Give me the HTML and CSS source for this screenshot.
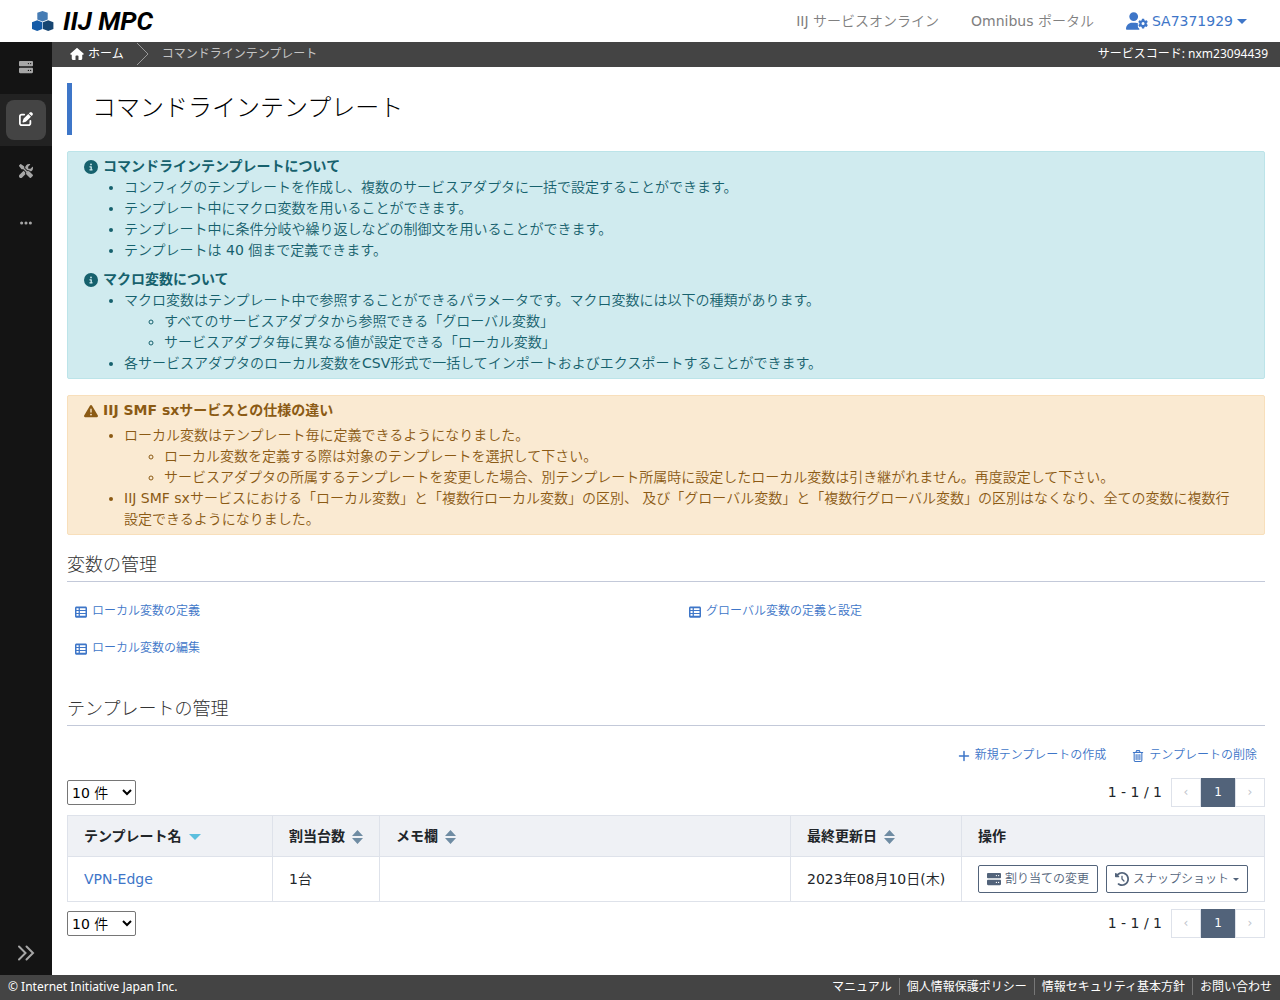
FILE: index.html
```html
<!DOCTYPE html>
<html lang="ja">
<head>
<meta charset="utf-8">
<meta name="viewport" content="width=device-width, initial-scale=1">
<title>コマンドラインテンプレート | IIJ MPC</title>
<link rel="stylesheet" href="styles.css">
</head>
<body>
<svg class="defs" aria-hidden="true">
  <symbol id="i-server" viewBox="0 0 512 512"><path d="M40 32C18 32 0 50 0 72v120c0 22 18 40 40 40h432c22 0 40-18 40-40V72c0-22-18-40-40-40H40zm304 76a24 24 0 1 1 0 48 24 24 0 1 1 0-48zm56 24a24 24 0 1 1 48 0 24 24 0 1 1-48 0zM40 280c-22 0-40 18-40 40v120c0 22 18 40 40 40h432c22 0 40-18 40-40V320c0-22-18-40-40-40H40zm304 76a24 24 0 1 1 0 48 24 24 0 1 1 0-48zm56 24a24 24 0 1 1 48 0 24 24 0 1 1-48 0z"/></symbol>
  <symbol id="i-edit" viewBox="0 0 512 512"><path d="M471.600 21.700c-21.900-21.900-57.300-21.900-79.200 0L362.300 51.700l97.900 97.900 30.100-30.100c21.900-21.900 21.900-57.300 0-79.200L471.600 21.700zm-299.200 220c-6.100 6.100-10.800 13.600-13.500 21.900l-29.600 88.800c-2.900 8.600-.6 18.100 5.800 24.600s15.900 8.700 24.600 5.800l88.800-29.600c8.200-2.700 15.700-7.400 21.900-13.500L437.700 172.300 339.700 74.300 172.400 241.700zM96 64c-53 0-96 43-96 96v256c0 53 43 96 96 96h256c53 0 96-43 96-96v-96c0-17.700-14.300-32-32-32s-32 14.300-32 32v96c0 17.700-14.300 32-32 32H96c-17.700 0-32-14.300-32-32V160c0-17.700 14.300-32 32-32h96c17.700 0 32-14.300 32-32s-14.300-32-32-32H96z"/></symbol>
  <symbol id="i-tools" viewBox="0 0 512 512"><path d="M78.600 5C69.100-2.400 55.600-1.500 47 7L7 47c-8.500 8.500-9.400 22-2.100 31.600l80 104c4.500 5.900 11.600 9.400 19 9.400h54.100l109 109c-14.700 29-10 65.400 14.300 89.600l112 112c12.500 12.500 32.800 12.500 45.300 0l64-64c12.500-12.500 12.500-32.800 0-45.300l-112-112c-24.200-24.200-60.600-29-89.600-14.300l-109-109V104c0-7.500-3.500-14.500-9.400-19L78.600 5zM19.900 396.100C7.200 408.800 0 426.100 0 444.100C0 481.600 30.400 512 67.900 512c18 0 35.300-7.200 48-19.900L233.700 374.300c-7.800-20.900-9-43.600-3.600-65.100l-61.700-61.700L19.900 396.100zM512 144c0-10.500-1.100-20.700-3.200-30.500c-2.400-11.200-16.100-14.100-24.200-6l-63.900 63.900c-3 3-7.100 4.700-11.300 4.700H352c-8.800 0-16-7.200-16-16V102.600c0-4.200 1.700-8.300 4.700-11.300l63.900-63.900c8.100-8.100 5.200-21.800-6-24.200C388.700 1.100 378.500 0 368 0C288.500 0 224 64.500 224 144l0 .8 85.300 85.300c36-9.100 75.800 .5 104 28.700L429 274.500c49-23 83-72.800 83-130.500z"/></symbol>
  <symbol id="i-dots" viewBox="0 0 448 512"><path d="M8 256a56 56 0 1 1 112 0 56 56 0 1 1-112 0zm160 0a56 56 0 1 1 112 0 56 56 0 1 1-112 0zm216-56a56 56 0 1 1 0 112 56 56 0 1 1 0-112z"/></symbol>
  <symbol id="i-home" viewBox="0 0 576 512"><path d="M575.800 255.500c0 18-15 32.100-32 32.100h-32l.7 160.200c0 35.300-28.700 64.200-64 64.200H352V352c0-17.700-14.300-32-32-32h-64c-17.700 0-32 14.300-32 32v160h-96c-35.300 0-64-28.700-64-64V287.600H32c-18 0-32-14-32-32.100 0-9 3-17 10-24L266.400 8c7-7 15-8 22-8s15 2 21 7l255.400 224.500c8 7 12 15 11 24z"/></symbol>
  <symbol id="i-info" viewBox="0 0 512 512"><path d="M256 512A256 256 0 1 0 256 0a256 256 0 1 0 0 512zM216 336h24v-64h-24c-13.300 0-24-10.700-24-24s10.700-24 24-24h48c13.300 0 24 10.700 24 24v88h8c13.300 0 24 10.700 24 24s-10.700 24-24 24h-80c-13.300 0-24-10.700-24-24s10.700-24 24-24zm40-208a32 32 0 1 1 0 64 32 32 0 1 1 0-64z"/></symbol>
  <symbol id="i-warn" viewBox="0 0 512 512"><path d="M256 32c14.200 0 27.300 7.500 34.500 19.800l216 368c7.300 12.400 7.300 27.700 .2 40.100S486.300 480 472 480H40c-14.300 0-27.600-7.700-34.700-20.100s-7-27.800 .2-40.100l216-368C228.700 39.500 241.800 32 256 32zm0 128c-13.300 0-24 10.700-24 24v112c0 13.300 10.700 24 24 24s24-10.700 24-24V184c0-13.300-10.700-24-24-24zm32 224a32 32 0 1 0-64 0 32 32 0 1 0 64 0z"/></symbol>
  <symbol id="i-table" viewBox="0 0 512 512"><path fill-rule="evenodd" d="M64 16h384c35 0 64 29 64 64v352c0 35-29 64-64 64H64c-35 0-64-29-64-64V80c0-35 29-64 64-64zM64 92h90v80H64zM208 92h240v80H208zM64 216h90v80H64zM208 216h240v80H208zM64 340h90v80H64zM208 340h240v80H208z"/></symbol>
  <symbol id="i-user" viewBox="0 0 640 512"><path d="M224 256A128 128 0 1 0 224 0a128 128 0 1 0 0 256zm-45.700 48C79.800 304 0 383.800 0 482.300 0 498.700 13.300 512 29.700 512H392.600c-5.400-9.400-8.600-20.300-8.600-32v-8c-31-16-46-49-35-80-13-22-6-48 10-63-25-16-54-25-81-25H178.300z"/><path fill-rule="evenodd" d="M465 190h62l10 42 24 14 42-13 31 53-32 30v28l32 30-31 53-42-12-24 14-10 43h-62l-10-43-24-14-42 12-31-53 32-30v-28l-32-30 31-53 42 13 24-14zM496 286a44 44 0 1 0 0 88 44 44 0 1 0 0-88z"/></symbol>
  <symbol id="i-plus" viewBox="0 0 448 512"><path d="M256 64c0-17.700-14.300-32-32-32s-32 14.300-32 32v160H32c-17.700 0-32 14.300-32 32s14.300 32 32 32h160v160c0 17.700 14.300 32 32 32s32-14.300 32-32V288h160c17.700 0 32-14.300 32-32s-14.300-32-32-32H256V64z"/></symbol>
  <symbol id="i-trash" viewBox="0 0 448 512"><path fill="none" stroke="currentColor" stroke-width="46" stroke-linecap="round" d="M24 104h400M136 96l32-70h112l32 70M60 104v336q0 48 48 48h232q48 0 48-48V104M144 190v212M224 190v212M304 190v212"/></symbol>
  <symbol id="i-history" viewBox="0 0 512 512"><path d="M75 75L41 41C25.900 25.900 0 36.600 0 57.900V168c0 13.300 10.700 24 24 24h110.100c21.400 0 32.100-25.900 17-41l-30.800-30.800C155 85.500 203 64 256 64c106 0 192 86 192 192s-86 192-192 192c-40.800 0-78.600-12.700-109.700-34.400-14.500-10.100-34.400-6.600-44.600 7.900s-6.600 34.400 7.900 44.600C151.200 495 201.700 512 256 512c141.400 0 256-114.600 256-256S397.400 0 256 0C185.300 0 121.300 28.700 75 75zm181 53c-13.300 0-24 10.700-24 24v104c0 6.400 2.500 12.500 7 17l72 72c9.400 9.400 24.600 9.400 33.900 0s9.400-24.600 0-33.900l-65-65V152c0-13.300-10.700-24-24-24z"/></symbol>
  <symbol id="i-sort" viewBox="0 0 11 14"><path d="M0 6L5.500 0 11 6zM0 8L5.500 14 11 8z"/></symbol>
  <symbol id="i-caret" viewBox="0 0 10 5"><path d="M0 0h10L5 5z"/></symbol>
</svg>

<header class="topbar">
  <a class="brand" href="#">
    <svg class="brand-mark" viewBox="0 0 22 20" aria-hidden="true"><path fill="#467cb4" d="M10.500 0l5.200 1.800v6.700l-5.200 1.900-5.200-1.900V1.800z"/><path fill="#155ca8" d="M5.200 9.300l5.200 2v6.700L5.200 20 0 18v-6.700z"/><path fill="#174672" d="M16.200 9.300l5.200 2v6.700l-5.200 2-5.200-2v-6.700z"/></svg>
    <span class="brand-name">IIJ MPC</span>
  </a>
  <nav class="topnav">
    <a href="#">IIJ サービスオンライン</a>
    <a href="#">Omnibus ポータル</a>
    <button class="account" type="button"><svg class="ic-user" aria-hidden="true"><use href="#i-user"/></svg><span>SA7371929</span><svg class="ic-caret" aria-hidden="true"><use href="#i-caret"/></svg></button>
  </nav>
</header>

<div class="shell">
  <aside class="sidebar">
    <nav class="side-nav">
      <a class="side-item" href="#" aria-label="サービスアダプタ"><span class="side-icon"><svg class="ic-14"><use href="#i-server"/></svg></span></a>
      <a class="side-item active" href="#" aria-label="テンプレート"><span class="side-icon"><svg class="ic-14"><use href="#i-edit"/></svg></span></a>
      <a class="side-item" href="#" aria-label="ツール"><span class="side-icon"><svg class="ic-14"><use href="#i-tools"/></svg></span></a>
      <a class="side-item" href="#" aria-label="その他"><span class="side-icon"><svg class="ic-14"><use href="#i-dots"/></svg></span></a>
    </nav>
    <button class="side-toggle" type="button" aria-label="メニューを開く"><svg viewBox="0 0 18 16"><path d="M2 1.500L8.500 8 2 14.500M9.500 1.500L16 8 9.500 14.500"/></svg></button>
  </aside>

  <div class="content">
    <div class="crumbs">
      <nav class="crumb-path">
        <a class="crumb-home" href="#"><svg class="ic-home" aria-hidden="true"><use href="#i-home"/></svg><span>ホーム</span></a>
        <svg class="crumb-sep" viewBox="0 0 12 24" aria-hidden="true"><path d="M0 1l11 11L0 23"/></svg>
        <span class="crumb-here">コマンドラインテンプレート</span>
      </nav>
      <span class="service-code">サービスコード: nxm23094439</span>
    </div>

    <main class="main">
      <h1 class="page-title">コマンドラインテンプレート</h1>

      <section class="alert info">
        <h2 class="alert-title"><svg class="ic-14"><use href="#i-info"/></svg>コマンドラインテンプレートについて</h2>
        <ul>
          <li>コンフィグのテンプレートを作成し、複数のサービスアダプタに一括で設定することができます。</li>
          <li>テンプレート中にマクロ変数を用いることができます。</li>
          <li>テンプレート中に条件分岐や繰り返しなどの制御文を用いることができます。</li>
          <li>テンプレートは 40 個まで定義できます。</li>
        </ul>
        <h2 class="alert-title"><svg class="ic-14"><use href="#i-info"/></svg>マクロ変数について</h2>
        <ul>
          <li>マクロ変数はテンプレート中で参照することができるパラメータです。マクロ変数には以下の種類があります。
            <ul>
              <li>すべてのサービスアダプタから参照できる「グローバル変数」</li>
              <li>サービスアダプタ毎に異なる値が設定できる「ローカル変数」</li>
            </ul>
          </li>
          <li>各サービスアダプタのローカル変数をCSV形式で一括してインポートおよびエクスポートすることができます。</li>
        </ul>
      </section>

      <section class="alert warning">
        <h2 class="alert-title"><svg class="ic-14"><use href="#i-warn"/></svg>IIJ SMF sxサービスとの仕様の違い</h2>
        <ul>
          <li>ローカル変数はテンプレート毎に定義できるようになりました。
            <ul>
              <li>ローカル変数を定義する際は対象のテンプレートを選択して下さい。</li>
              <li>サービスアダプタの所属するテンプレートを変更した場合、別テンプレート所属時に設定したローカル変数は引き継がれません。再度設定して下さい。</li>
            </ul>
          </li>
          <li>IIJ SMF sxサービスにおける「ローカル変数」と「複数行ローカル変数」の区別、 及び「グローバル変数」と「複数行グローバル変数」の区別はなくなり、全ての変数に複数行設定できるようになりました。</li>
        </ul>
      </section>

      <h2 class="section-title">変数の管理</h2>
      <div class="link-grid">
        <a class="text-link" href="#"><svg class="ic-12"><use href="#i-table"/></svg>ローカル変数の定義</a>
        <a class="text-link" href="#"><svg class="ic-12"><use href="#i-table"/></svg>グローバル変数の定義と設定</a>
        <a class="text-link" href="#"><svg class="ic-12"><use href="#i-table"/></svg>ローカル変数の編集</a>
      </div>

      <h2 class="section-title">テンプレートの管理</h2>
      <div class="actions">
        <a class="text-link" href="#"><svg class="ic-12"><use href="#i-plus"/></svg>新規テンプレートの作成</a>
        <a class="text-link" href="#"><svg class="ic-12"><use href="#i-trash"/></svg>テンプレートの削除</a>
      </div>

      <div class="pager">
        <select class="page-size" aria-label="表示件数"><option>10 件</option></select>
        <div class="pager-right">
          <span>1 - 1 / 1</span>
          <div class="pages"><button type="button" disabled aria-label="前へ">‹</button><button type="button" class="current">1</button><button type="button" disabled aria-label="次へ">›</button></div>
        </div>
      </div>

      <table class="grid">
        <colgroup><col class="c-name"><col class="c-count"><col><col class="c-date"><col class="c-ops"></colgroup>
        <thead>
          <tr>
            <th><span class="th">テンプレート名<svg class="ic-down" aria-hidden="true"><use href="#i-caret"/></svg></span></th>
            <th><span class="th">割当台数<svg class="ic-sort" aria-hidden="true"><use href="#i-sort"/></svg></span></th>
            <th><span class="th">メモ欄<svg class="ic-sort" aria-hidden="true"><use href="#i-sort"/></svg></span></th>
            <th><span class="th">最終更新日<svg class="ic-sort" aria-hidden="true"><use href="#i-sort"/></svg></span></th>
            <th>操作</th>
          </tr>
        </thead>
        <tbody>
          <tr>
            <td><a href="#">VPN-Edge</a></td>
            <td>1台</td>
            <td></td>
            <td>2023年08月10日(木)</td>
            <td class="ops">
              <div class="op-row">
                <button class="op" type="button"><svg class="ic-14"><use href="#i-server"/></svg>割り当ての変更</button>
                <button class="op" type="button"><svg class="ic-14"><use href="#i-history"/></svg>スナップショット<svg class="ic-mini" aria-hidden="true"><use href="#i-caret"/></svg></button>
              </div>
            </td>
          </tr>
        </tbody>
      </table>

      <div class="pager">
        <select class="page-size" aria-label="表示件数"><option>10 件</option></select>
        <div class="pager-right">
          <span>1 - 1 / 1</span>
          <div class="pages"><button type="button" disabled aria-label="前へ">‹</button><button type="button" class="current">1</button><button type="button" disabled aria-label="次へ">›</button></div>
        </div>
      </div>
    </main>
  </div>
</div>

<footer class="footer">
  <span>© Internet Initiative Japan Inc.</span>
  <nav class="foot-nav">
    <a href="#">マニュアル</a>
    <a href="#">個人情報保護ポリシー</a>
    <a href="#">情報セキュリティ基本方針</a>
    <a href="#">お問い合わせ</a>
  </nav>
</footer>
</body>
</html>
```
FILE: styles.css
```css
:root {
  --blue: #3e76c8;
  --slate: #52637a;
  --line: #dee2ea;
  --bar: #444;
  --ui: "Noto Sans", "Noto Sans CJK JP", sans-serif;
  --strong: "DejaVu Sans", "Noto Sans CJK JP", sans-serif;
}

* { box-sizing: border-box; }

body {
  margin: 0;
  min-height: 100vh;
  display: flex;
  flex-direction: column;
  background: #fff;
  color: #212529;
  font: 400 14px/21px "DejaVu Sans", "Noto Sans CJK JP DemiLight", "Noto Sans CJK JP", sans-serif;
}

a { color: var(--blue); text-decoration: none; }
button, select { font: inherit; color: inherit; }
svg { fill: currentColor; flex: none; }
.defs { display: none; }
.ic-14 { width: 14px; height: 14px; }
.ic-12 { width: 12px; height: 12px; }

/* Top bar */
.topbar {
  height: 42px;
  padding: 0 33px 0 32px;
  display: flex;
  align-items: center;
  justify-content: space-between;
}
.brand { display: flex; align-items: center; gap: 9px; color: #000; }
.brand-mark { width: 22px; height: 20px; }
.brand-name { font: italic 700 26px/32px Roboto, sans-serif; }
.topnav { display: flex; align-items: center; gap: 32px; }
.topnav a { color: #808080; }
.account {
  display: flex;
  align-items: center;
  gap: 4px;
  padding: 0;
  border: 0;
  background: none;
  color: var(--blue);
}
.ic-user { width: 22px; height: 18px; }
.ic-caret { width: 10px; height: 5px; }

/* Sidebar and content */
.shell { flex: 1; display: flex; }
.sidebar {
  width: 52px;
  flex: none;
  display: flex;
  flex-direction: column;
  justify-content: space-between;
  background: #141414;
  color: #a6a6a6;
}
.side-nav { display: flex; flex-direction: column; }
.side-item { padding: 6px; color: inherit; }
.side-icon {
  height: 40px;
  padding-bottom: 2px;
  display: flex;
  align-items: center;
  justify-content: center;
  border-radius: 8px;
}
.side-item.active { background: #222; color: #fff; }
.active .side-icon { background: #444; }
.side-toggle {
  height: 44px;
  padding: 0;
  border: 0;
  background: none;
  display: flex;
  align-items: center;
  justify-content: center;
}
.side-toggle svg {
  width: 18px;
  height: 16px;
  fill: none;
  stroke: currentColor;
  stroke-width: 2;
  stroke-linecap: round;
}
.content { flex: 1; min-width: 0; }

.crumbs {
  height: 25px;
  padding: 0 12px 2px 18px;
  display: flex;
  align-items: center;
  justify-content: space-between;
  background: var(--bar);
  color: #fff;
  font: 12px/18px var(--ui);
}
.crumb-path, .crumb-home { display: flex; align-items: center; }
.crumb-path { gap: 13px; }
.crumb-home { gap: 4px; color: #fff; }
.ic-home { width: 14px; height: 12px; }
.crumb-sep { width: 12px; height: 24px; fill: none; stroke: #999; }
.crumb-here { color: #c4c4c4; }

.main { padding: 16px 15px 37px; }
.page-title {
  margin: 0 0 16px;
  padding: 7px 20px 9px;
  border-left: 5px solid var(--blue);
  color: #000;
  font-family: var(--strong);
  font-size: 24px;
  font-weight: 300;
  line-height: 36px;
}

/* Notices */
.alert {
  margin-bottom: 16px;
  padding: 4px 24px 4px 16px;
  border: 1px solid;
  border-radius: 2px;
}
.alert.info { background: #d0ebef; border-color: #bce4e9; color: #16616d; }
.alert.warning { background: #faead2; border-color: #f8dfbb; color: #8b5a14; }
.alert-title {
  margin: 0;
  display: flex;
  align-items: center;
  gap: 5px;
  font-family: var(--strong);
  font-size: 14px;
  font-weight: 700;
}
.alert ul { margin: 0; padding-left: 40px; }
.alert ul + .alert-title { margin-top: 8px; }
.warning > .alert-title { margin-bottom: 4px; }

/* Sections */
.section-title {
  margin: 0;
  padding-bottom: 3px;
  border-bottom: 1px solid #c3c9d9;
  color: #333;
  font-family: var(--strong);
  font-size: 18px;
  font-weight: 300;
  line-height: 27px;
}
.link-grid {
  margin: 11px 0 28px;
  display: grid;
  grid-template-columns: 1fr 1fr;
  column-gap: 30px;
}
.text-link {
  padding: 8px;
  display: flex;
  align-items: center;
  gap: 5px;
  font-size: 12px;
}
.actions {
  margin: 11px 0 4px;
  display: flex;
  justify-content: flex-end;
  gap: 10px;
}

/* Pager */
.pager {
  height: 29px;
  display: flex;
  align-items: center;
  justify-content: space-between;
}
.page-size {
  width: 69px;
  height: 25px;
  padding: 0;
  border: 1px solid #767676;
  border-radius: 2px;
  background: #fff;
  color: #000;
}
.pager-right { display: flex; align-items: center; gap: 9px; }
.pages { display: flex; }
.pages button {
  width: 30px;
  height: 29px;
  padding: 0;
  border: 1px solid var(--line);
  background: #fff;
  color: #c0c4cc;
  font-size: 12px;
}
.pages .current {
  width: 34px;
  border-color: var(--slate);
  background: var(--slate);
  color: #fff;
}

/* Template table */
.grid {
  width: 100%;
  margin: 8px 0 7px;
  border-collapse: collapse;
  table-layout: fixed;
}
.c-name { width: 205px; }
.c-count { width: 107px; }
.c-date { width: 171px; }
.c-ops { width: 303px; }
.grid th, .grid td {
  padding: 10px 16px;
  border: 1px solid var(--line);
  text-align: left;
  white-space: nowrap;
}
.grid th {
  padding-bottom: 9px;
  background: #eff1f5;
  font-family: var(--strong);
  font-weight: 700;
}
.grid .ops { padding: 8px 16px; }
.th { display: flex; align-items: center; gap: 7px; }
.ic-sort { width: 11px; height: 14px; color: #6f8ca3; }
.ic-down { width: 12px; height: 6px; color: #5bbfde; }
.op-row { display: flex; gap: 8px; }
.op {
  height: 28px;
  padding: 0 8px;
  display: flex;
  align-items: center;
  gap: 4px;
  border: 1px solid var(--slate);
  border-radius: 2px;
  background: #fff;
  color: var(--slate);
  font-size: 12px;
}
.ic-mini { width: 6px; height: 3px; }

/* Footer */
.footer {
  height: 25px;
  padding: 0 1px 2px 8px;
  display: flex;
  align-items: center;
  justify-content: space-between;
  background: var(--bar);
  color: #fff;
  font: 12px/17px var(--ui);
}
.foot-nav { display: flex; }
.foot-nav a { padding: 0 7px; color: #fff; }
.foot-nav a + a { border-left: 1px solid #777; }
```
